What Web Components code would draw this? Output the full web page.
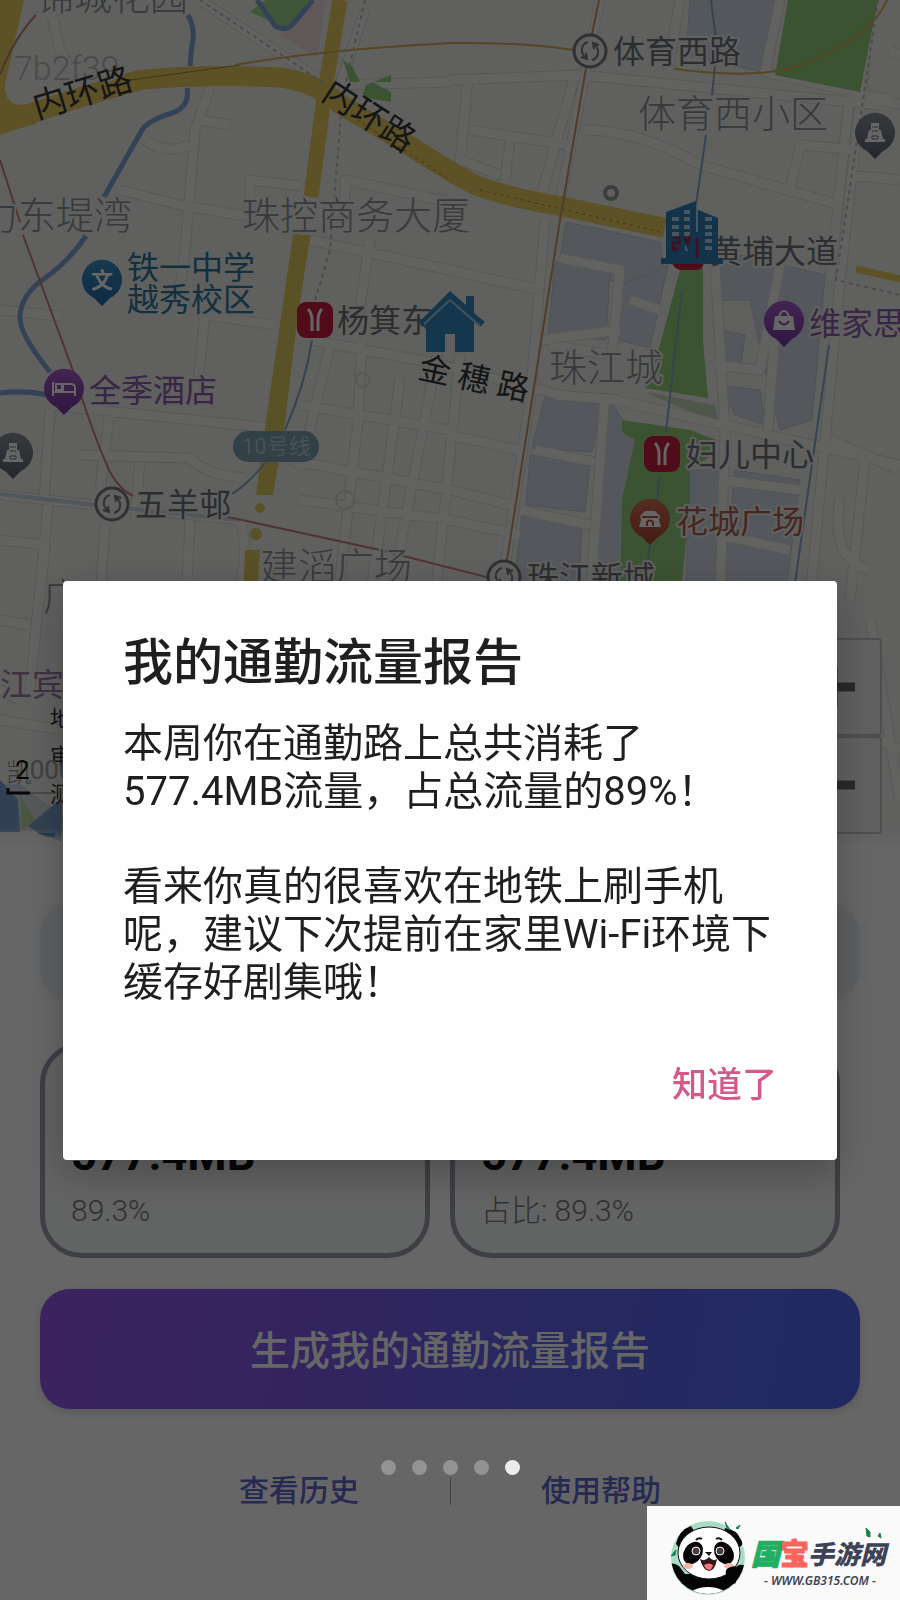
<!DOCTYPE html>
<html lang="zh-CN">
<head>
<meta charset="UTF-8">
<meta name="viewport" content="width=device-width, initial-scale=1">
<title>我的通勤流量报告</title>
<style>
  body {
    margin: 0;
    background: #fff;
    font-family: Roboto, "Noto Sans CJK SC", sans-serif;
  }
</style>
</head>
<body>
<commute-page>
  <city-map slot="map"></city-map>
  <map-zoom slot="zoom"></map-zoom>
  <usage-card slot="card"><span slot="value">577.4MB</span><span slot="note">89.3%</span></usage-card>
  <usage-card slot="card"><span slot="value">577.4MB</span><span slot="note">占比: 89.3%</span></usage-card>
  <report-button slot="action">生成我的通勤流量报告</report-button>
  <foot-links slot="links">
    <a href="#history">查看历史</a>
    <a href="#help">使用帮助</a>
  </foot-links>
</commute-page>
<report-dialog>
  <span slot="title">我的通勤流量报告</span>
  <p>本周你在通勤路上总共消耗了577.4MB流量&#xFF0C;占总流量的89%&#xFF01;</p>
  <p>看来你真的很喜欢在地铁上刷手机呢&#xFF0C;建议下次提前在家里Wi-Fi环境下缓存好剧集哦&#xFF01;</p>
  <span slot="confirm">知道了</span>
</report-dialog>
<page-dots count="5" active="4"></page-dots>
<site-mark></site-mark>

<script>
  class CommutePage extends HTMLElement {
    connectedCallback() {
      this.attachShadow({ mode: 'open' });
      this.shadowRoot.innerHTML = `
        <style>
          :host {
            display: block;
            min-height: 100vh;
          }
          .map {
            position: relative;
          }
          .zoom {
            position: absolute;
            right: 18px;
            bottom: 14px;
          }
          .panel {
            display: flex;
            flex-direction: column;
            padding: 56px 40px 84px;
          }
          .tip {
            height: 96px;
            border-radius: 32px;
            background: #e8eef4;
            box-shadow: 0 0 12px #e8eef4;
          }
          .cards {
            display: grid;
            grid-template-columns: 1fr 1fr;
            gap: 20px;
            margin: 42px 20px 31px 0;
          }
        </style>
        <div class="map">
          <slot name="map"></slot>
          <div class="zoom"><slot name="zoom"></slot></div>
        </div>
        <div class="panel">
          <div class="tip"></div>
          <div class="cards"><slot name="card"></slot></div>
          <slot name="action"></slot>
          <slot name="links"></slot>
        </div>
      `;
    }
  }
  customElements.define('commute-page', CommutePage);

  class CityMap extends HTMLElement {
    connectedCallback() {
      this.attachShadow({ mode: 'open' });

      const pin = (x, y, color, glyph) => `
        <g transform="translate(${x} ${y})">
          <path d="M0 26L-8 18A20 20 0 1 1 8 18Z" fill="${color}"/>
          ${glyph}
        </g>`;
      const metro = (x, y) => `
        <g transform="translate(${x} ${y})">
          <rect x="-18" y="-18" width="36" height="36" rx="9" fill="#c9203f"/>
          <path d="M-7 -11Q-3 -7 -3 0V11M7 -11Q3 -7 3 0V11" fill="none" stroke="#fff" stroke-width="3"/>
        </g>`;
      const station = (x, y) => `
        <g transform="translate(${x} ${y})" fill="none" stroke="#74787c" stroke-width="3">
          <circle r="16" fill="#f0f0ee"/>
          <path d="M-2 -9Q-9 -7 -8 1Q-7 4 -4 7M-9 6L-3 8L-4 2M2 9Q9 7 8 -1Q7 -4 4 -7M9 -6L3 -8L4 -2" stroke-width="2"/>
        </g>`;
      const tower = `<path d="M-10 9H10V6H8L6 -3H4V-10H-4V-3H-6L-8 6H-10Z" fill="#fff"/>
        <path d="M-3 -6H3M-3 -2H3M-3 3H3V6H-3Z" stroke="#6c727c" stroke-width="1" fill="none"/>`;

      const streets = `
        M52 15L60 50L72 72 M210 88L195 130L185 250L178 300 M120 190L180 205L245 216 M145 140Q165 155 190 145
        M250 210V180L300 186 M345 215V180L450 202 M200 120L230 125 M310 240L450 270 M370 240L355 340
        M0 310L60 316 M205 315L275 325 M205 315L195 410 M50 405L270 428 M110 410L100 490 M50 410L44 500
        M80 455L190 458Q205 475 245 478 M140 460L135 520 M0 495L95 505L240 520 M0 540L45 545L40 600
        M48 505L30 690 M105 525L100 600 M190 520L186 600 M240 520Q250 545 238 600 M0 620L30 625
        M310 340L430 362L560 395 M330 345L300 470 M362 340L358 420L340 580 M300 405L450 430 M290 460L450 490
        M400 380L370 600 M440 340L390 600 M460 355L435 600 M300 500L450 520L520 535 M450 435L525 452 M450 490L510 505
        M200 0L320 80 M365 10L340 85L450 82 M450 80L580 75L880 105 M468 80L460 160L500 175 M470 130L570 145 M510 140L505 180
        M575 75L540 200 M585 130Q640 130 700 165L840 205 M600 0L560 200 M680 0L668 70 M780 0L765 72L890 100
        M800 145L790 190 M800 145L860 150 M450 270L540 290 M545 220L530 400L500 600 M540 340L620 330
        M560 258L620 270L612 355L550 345 M630 300L660 310 M555 395L620 400 M535 450L595 462 M520 510L590 525
        M605 395L590 600 M615 400L900 465 M715 265L725 430L720 600 M780 265L760 370L715 365 M775 330L768 430
        M720 480L800 490 M720 535L790 550 M865 60L840 280L810 600 M830 440L900 470 M865 460L850 600
        M840 500Q830 560 870 570 M860 0L830 280 M890 50L900 55 M880 100L900 105 M850 175L900 180
        M870 620L900 800 M880 740L900 750 M0 690L20 700 M0 720L62 730`;

      const blocks = [
        '690,0 775,0 762,72 686,55', '566,222 660,242 664,268 655,300 560,258', '555,262 610,272 606,340 548,335',
        '622,285 668,265 650,348 618,340', '718,250 825,275 812,420 780,430 765,370 750,300 718,300',
        '720,330 745,335 740,372 722,365', '720,385 760,390 765,425 735,415', '545,396 602,405 592,452 532,448',
        '530,455 590,465 585,512 526,505', '522,515 582,525 578,600 512,600', '610,400 635,440 625,600 592,600',
        '690,470 725,470 720,600 685,600', '735,470 800,480 785,600 722,590', '0,785 20,785 40,800 62,815 62,830 0,830'
      ];

      this.shadowRoot.innerHTML = `
        <style>
          :host {
            display: block;
          }
          svg {
            display: block;
            width: 100%;
            height: auto;
          }
          text {
            font-family: Roboto, "Noto Sans CJK SC", sans-serif;
            font-size: 32px;
            fill: #6c7278;
            stroke: #f0f0ee;
            stroke-width: 4px;
            stroke-linejoin: round;
            paint-order: stroke;
          }
          .area {
            font-size: 38px;
            font-weight: 300;
            fill: #8a9098;
          }
          .road {
            fill: #363636;
            stroke: none;
          }
          .small {
            font-size: 22px;
          }
        </style>
        <svg viewBox="0 0 900 848" role="img" aria-label="通勤地图">
          <defs>
            <linearGradient id="fade" x1="0" y1="0" x2="0" y2="1">
              <stop offset="0" stop-color="#fff" stop-opacity="0"/>
              <stop offset="1" stop-color="#fff"/>
            </linearGradient>
            <linearGradient id="blue" x1="0" y1="0" x2="0" y2="1">
              <stop offset="0" stop-color="#3a8fc4"/><stop offset="1" stop-color="#1f6ea8"/>
            </linearGradient>
            <linearGradient id="purple" x1="0" y1="0" x2="0" y2="1">
              <stop offset="0" stop-color="#a55fc8"/><stop offset="1" stop-color="#7a38a6"/>
            </linearGradient>
            <linearGradient id="grey" x1="0" y1="0" x2="0" y2="1">
              <stop offset="0" stop-color="#8a9098"/><stop offset="1" stop-color="#5a626e"/>
            </linearGradient>
            <linearGradient id="red" x1="0" y1="0" x2="0" y2="1">
              <stop offset="0" stop-color="#d4705a"/><stop offset="1" stop-color="#a8452f"/>
            </linearGradient>
          </defs>
          <rect width="900" height="848" fill="#f0f0ee"/>

          <!-- city blocks, parks -->
          <g fill="#d3d9e6" stroke="#c3c9d4">
            ${blocks.map(points => `<polygon points="${points}"/>`).join('')}
          </g>
          <path d="M293 0H325L318 58L280 35Z" fill="#ecdcdc"/>
          <path d="M250 12L265 0H310L290 30Z" fill="#a4d68c"/>

          <!-- streets -->
          <path d="${streets}" fill="none" stroke="#d9d9d7" stroke-width="11" stroke-linejoin="round"/>
          <path d="${streets}" fill="none" stroke="#f4f4f2" stroke-width="9" stroke-linejoin="round"/>
          <g fill="none" stroke="#d9d9d7" stroke-width="2">
            <circle cx="363" cy="380" r="7"/>
            <circle cx="345" cy="500" r="9"/>
          </g>
          <g fill="#96cf7c">
            <path d="M788 0H878L860 92L775 75Z"/>
            <path d="M680 270L703 268L703 340L708 398L645 388L660 345Z"/>
            <path d="M622 420L690 430L717 440L712 455L690 470L690 505L680 600H620L622 500L635 440L622 432Z"/>
            <path d="M366 85L391 75V82L372 82L391 92V102L362 97Z"/>
            <path d="M343 60L352 66L360 82L350 82Z"/>
          </g>
          <path d="M645 392L715 405L718 420L690 412Z" fill="#c5d8b8"/>

          <!-- rivers -->
          <g fill="none" stroke="#7fa6d8" stroke-width="5">
            <path d="M188 15Q196 30 192 45L190 66M187 88Q190 105 175 112Q148 120 142 130L104 197M86 236Q70 260 45 278Q20 295 20 318Q20 335 50 372M0 393Q25 390 48 395"/>
            <path d="M257 0L275 26Q285 32 293 24L313 0"/>
          </g>
          <path d="M0 494L95 505L240 520" fill="none" stroke="#c8d6e2" stroke-width="4"/>

          <!-- ring road and avenue -->
          <path d="M0 0H24L5 85Q4 104 22 105L36 102V124L0 134Z" fill="#e8cc60"/>
          <g fill="none" stroke="#e8cc60">
            <path d="M-10 128Q60 102 140 80Q200 74 270 77Q310 78 340 104L410 146Q450 172 475 185Q510 198 560 206L665 228" stroke-width="20"/>
            <path d="M856 269L905 280" stroke-width="7"/>
            <path d="M340 0L325 90L311 197M303 235L292 300L276 425" stroke-width="15"/>
          </g>
          <path d="M293 235H310L296 330L284 430L273 495H256L266 420Z" fill="#e2cc62"/>
          <g fill="#dcca60">
            <circle cx="260" cy="508" r="5"/><circle cx="256" cy="534" r="6"/><path d="M245 550H260L257 600H243Z"/>
          </g>
          <g fill="none" stroke="#a8843c" stroke-width="1">
            <path d="M345 112L450 180M480 190L660 232" stroke-dasharray="3 4"/>
            <path d="M130 80L240 65"/>
          </g>

          <!-- rail and metro lines -->
          <g fill="none" stroke-width="2">
            <path d="M36 15Q14 38 0 75M0 160L20 222M23 235L72 368Q95 440 110 472Q120 490 133 496M228 517L380 550L490 578" stroke="#c48086"/>
            <path d="M235 65Q320 50 450 43Q520 42 573 50M675 69Q760 80 800 65Q870 40 887 0" stroke="#d8ae58"/>
            <path d="M599 0L592 34M586 68L560 220L507 560" stroke="#c49a68"/>
            <path d="M711 0L716 40M715 66L712 95M706 135L696 205M682 290L666 432M829 345L794 590M660 475L657 500M650 545L648 560M312 340Q305 385 285 430M265 463Q250 482 232 494" stroke="#89a7c6"/>
            <path d="M200 0L325 84M365 0L345 85M341 115L330 250L315 300M878 0L836 280L900 295" stroke="#bbb" stroke-dasharray="4 4"/>
          </g>
          <circle cx="611" cy="193" r="6" fill="#f0f0ee" stroke="#96989a" stroke-width="4"/>

          <!-- area names -->
          <text class="area" x="36" y="10">锦城花园</text>
          <text class="area" x="14" y="80" style="font-size:34px;fill:#b8b8b8">7b2f39</text>
          <text class="area" x="-20" y="229">力东堤湾</text>
          <text class="area" x="242" y="229">珠控商务大厦</text>
          <text class="area" x="638" y="127">体育西小区</text>
          <text class="area" x="549" y="381">珠江城</text>
          <text class="area" x="260" y="580">建滔广场</text>
          <text class="area" x="43" y="610">广</text>

          <!-- road names -->
          <text class="road" style="font-size:34px" transform="translate(37 119) rotate(-17)">内环路</text>
          <text class="road" style="font-size:34px" transform="translate(320 98) rotate(33)">内环路</text>
          <text class="road" transform="translate(417 378) rotate(12)">金 穗 路</text>

          <!-- places -->
          ${pin(102, 280, 'url(#blue)', '<text class="small" x="-11" y="8" style="fill:#fff;stroke:none;font-weight:700">文</text>')}
          <text x="127" y="279" style="fill:#2d7898">铁一中学</text>
          <text x="127" y="311" style="fill:#2d7898">越秀校区</text>
          ${pin(64, 389, 'url(#purple)', '<path d="M-11 -7V7M11 7V-1Q11 -5 7 -5H-1V3M-11 3H11" stroke="#fff" stroke-width="2" fill="none"/><rect x="-8" y="-5" width="6" height="6" fill="none" stroke="#fff" stroke-width="2"/>')}
          <text x="89" y="402" style="fill:#8f5cac">全季酒店</text>
          ${pin(13, 453, 'url(#grey)', tower)}
          ${pin(875, 133, 'url(#grey)', tower)}
          ${pin(784, 321, 'url(#purple)', '<path d="M-9 -5H9L11 9H-11Z" fill="#fff"/><path d="M-5 -5Q0 -15 5 -5" stroke="#fff" stroke-width="2" fill="none"/><path d="M-5 0Q0 7 5 0" stroke="#8a48b4" stroke-width="2" fill="none"/>')}
          <text x="809" y="335" style="fill:#8f5cac">维家思</text>
          ${pin(650, 519, 'url(#red)', '<path d="M-11 8L-9 1L-10 -3L-5 -8H5L10 -3L9 1L11 8Z" fill="#fff"/><path d="M-8 -2H8M-3 7V3Q0 0 3 3V7" stroke="#b5533d" stroke-width="2" fill="none"/>')}
          <text x="676" y="533" style="fill:#b06050">花城广场</text>
          ${metro(315, 320)}
          <text x="337" y="332">杨箕东</text>
          ${metro(662, 454)}
          <text x="686" y="466">妇儿中心</text>
          ${station(590, 51)}
          <text x="613" y="63">体育西路</text>
          ${station(112, 504)}
          <text x="135" y="516">五羊邨</text>
          ${station(504, 577)}
          <text x="527" y="589">珠江新城</text>
          <rect x="233" y="431" width="86" height="31" rx="15" fill="#7aa2b2"/>
          <text class="small" x="242" y="454" style="fill:#b4ccd4;stroke:none">10号线</text>
          <text x="710" y="263">黄埔大道</text>

          <!-- office -->
          <path d="M672 262Q674 270 682 270H696Q703 270 704 262Z" fill="#c9203f"/>
          <path d="M661 264V258H666V212L696 201V209L718 218V258H723V264Z" fill="#3080bc"/>
          <path d="M697 206V232" stroke="#b8d4ea" stroke-width="2"/>
          <path d="M672 219H679M672 227H679M672 234H679M684 212H690M684 219H690M684 227H690M684 234H690M705 219H712M705 227H712M705 234H712M705 241H712M705 248H712" stroke="#b8d4ea" stroke-width="4"/>
          <path d="M673 238H679V243H673V249H679M684 237L688 243L690 236M697 238V258" fill="none" stroke="#a32a58" stroke-width="3"/>
          <path d="M685 246L687 251" stroke="#b8d4ea" stroke-width="2"/>

          <!-- home -->
          <path d="M419 322L450 291L466 305V296H474V313L485 322L480 327L474 322V352H455V334H445V352H426V323L422 327Z" fill="#3389c4"/>
          <path d="M424 324L450 300L480 326" fill="none" stroke="#a9cfe6" stroke-width="2"/>

          <!-- scale and notices -->
          <path d="M20 795L35 820L22 830Z" fill="#b8d69a"/>
          <path d="M0 780L18 800L20 832H0Z" fill="#7ca0d0"/>
          <path d="M28 826L62 798V842L40 834Z" fill="#7d9fca"/>
          <path d="M37 833H55V837H48Z" fill="#1f5c98"/>
          <text x="0" y="696" style="fill:#9a7aa6">江宾</text>
          <text class="area" x="6" y="782" style="font-size:26px;stroke:none">凯</text>
          <text class="small" x="50" y="726" style="fill:#333;stroke:none">地</text>
          <text class="small" x="50" y="764" style="fill:#333;stroke:none">审</text>
          <text class="small" x="50" y="802" style="fill:#333;stroke:none">测</text>
          <text x="15" y="779" style="font-size:26px;fill:#111;stroke:none">2<tspan fill="#a0a0a0">000</tspan></text>
          <path d="M8 788V793H30" fill="none" stroke="#111" stroke-width="3"/>
          <path d="M30 793H62" stroke="#777" stroke-width="1"/>
          <rect y="828" width="900" height="20" fill="url(#fade)"/>
        </svg>
      `;
    }
  }
  customElements.define('city-map', CityMap);

  class MapZoom extends HTMLElement {
    connectedCallback() {
      this.attachShadow({ mode: 'open' });
      this.shadowRoot.innerHTML = `
        <style>
          :host {
            display: flex;
            flex-direction: column;
          }
          button {
            display: grid;
            place-items: center;
            width: 98px;
            height: 98px;
            padding: 0;
            border: 2px solid #c4c4c4;
            border-radius: 4px;
            background: rgba(240, 240, 240, 0.8);
          }
        </style>
        <button aria-label="放大">
          <svg width="44" height="44"><path d="M0 22H44M22 2V42" stroke="#666" stroke-width="9"/></svg>
        </button>
        <button aria-label="缩小">
          <svg width="44" height="44"><path d="M0 22H44" stroke="#666" stroke-width="9"/></svg>
        </button>
      `;
    }
  }
  customElements.define('map-zoom', MapZoom);

  class UsageCard extends HTMLElement {
    connectedCallback() {
      this.attachShadow({ mode: 'open' });
      this.shadowRoot.innerHTML = `
        <style>
          :host {
            display: flex;
            flex-direction: column;
            justify-content: flex-end;
            gap: 8px;
            box-sizing: border-box;
            min-height: 216px;
            padding: 22px 26px;
            border: 5px solid #9a9eac;
            border-radius: 42px;
            background: #f6f7f7;
          }
          .value {
            font-size: 45px;
            line-height: 56px;
            font-weight: 700;
            color: #111;
          }
          .note {
            font-size: 30px;
            line-height: 40px;
            font-weight: 300;
            color: #7a7a7a;
          }
        </style>
        <div class="value"><slot name="value"></slot></div>
        <div class="note"><slot name="note"></slot></div>
      `;
    }
  }
  customElements.define('usage-card', UsageCard);

  class ReportButton extends HTMLElement {
    connectedCallback() {
      this.attachShadow({ mode: 'open' });
      this.shadowRoot.innerHTML = `
        <style>
          :host {
            display: block;
          }
          button {
            width: 100%;
            height: 120px;
            padding: 6px 0 0;
            border: 0;
            border-radius: 30px;
            background: linear-gradient(100deg, #9658f0, #7a5cee 40%, #6464f0 60%, #5268f4);
            box-shadow: 0 3px 8px rgba(60, 60, 90, 0.2);
            font: 500 40px/48px Roboto, "Noto Sans CJK SC", sans-serif;
            color: #fff;
          }
        </style>
        <button><slot></slot></button>
      `;
    }
  }
  customElements.define('report-button', ReportButton);

  class FootLinks extends HTMLElement {
    connectedCallback() {
      this.attachShadow({ mode: 'open' });
      this.shadowRoot.innerHTML = `
        <style>
          :host {
            display: flex;
            justify-content: center;
            align-items: center;
            gap: 182px;
            margin-top: 58px;
            background: linear-gradient(#aaa, #aaa) center / 1px 28px no-repeat;
          }
          ::slotted(a) {
            font-size: 30px;
            line-height: 48px;
            font-weight: 500;
            color: #6068cc;
            text-decoration: none;
          }
        </style>
        <slot></slot>
      `;
    }
  }
  customElements.define('foot-links', FootLinks);

  class ReportDialog extends HTMLElement {
    connectedCallback() {
      this.attachShadow({ mode: 'open' });
      this.shadowRoot.innerHTML = `
        <style>
          :host {
            position: fixed;
            inset: 0;
            display: flex;
            align-items: center;
            justify-content: center;
            padding-top: 140px;
            background: rgba(0, 0, 0, 0.6);
          }
          .dialog {
            display: flex;
            flex-direction: column;
            box-sizing: border-box;
            width: 86%;
            padding: 52px 60px 50px;
            border-radius: 4px;
            background: #fefefe;
            box-shadow: 0 12px 40px rgba(0, 0, 0, 0.25);
          }
          h2 {
            margin: 0 0 27px;
            font-size: 50px;
            line-height: 60px;
            font-weight: 500;
            color: #1f1f1f;
          }
          .body {
            display: flex;
            flex-direction: column;
            gap: 47px;
          }
          ::slotted(p) {
            margin: 0;
            font-size: 40px;
            line-height: 48px;
            color: #1f1f1f;
          }
          button {
            align-self: flex-end;
            margin-top: 55px;
            padding: 0;
            border: 0;
            background: none;
            font: 500 35px/48px Roboto, "Noto Sans CJK SC", sans-serif;
            color: #d4588c;
          }
        </style>
        <div class="dialog" role="dialog" aria-modal="true">
          <h2><slot name="title"></slot></h2>
          <div class="body"><slot></slot></div>
          <button><slot name="confirm"></slot></button>
        </div>
      `;
    }
  }
  customElements.define('report-dialog', ReportDialog);

  class PageDots extends HTMLElement {
    connectedCallback() {
      const count = Number(this.getAttribute('count'));
      const active = Number(this.getAttribute('active'));
      let dots = '';
      for (let i = 0; i < count; i++) {
        dots += `<i class="${i === active ? 'active' : ''}"></i>`;
      }
      this.attachShadow({ mode: 'open' });
      this.shadowRoot.innerHTML = `
        <style>
          :host {
            position: fixed;
            left: 0;
            right: 0;
            bottom: 125px;
            display: flex;
            justify-content: center;
            gap: 16px;
          }
          i {
            width: 15px;
            height: 15px;
            border-radius: 50%;
            background: #939393;
          }
          .active {
            background: #ececec;
          }
        </style>
        ${dots}
      `;
    }
  }
  customElements.define('page-dots', PageDots);

  class SiteMark extends HTMLElement {
    connectedCallback() {
      this.attachShadow({ mode: 'open' });
      this.shadowRoot.innerHTML = `
        <style>
          :host {
            position: fixed;
            right: 0;
            bottom: 0;
            background: #fafafa;
          }
          svg {
            display: block;
          }
          text {
            font-family: "Noto Sans CJK SC", sans-serif;
            font-weight: 900;
            stroke-linejoin: round;
          }
          .url {
            font-family: "Noto Sans", sans-serif;
            font-size: 12px;
            font-style: italic;
            font-weight: 600;
          }
        </style>
        <svg width="253" height="94" viewBox="0 0 253 94">
          <defs><clipPath id="disc"><circle cx="61" cy="51" r="37"/></clipPath></defs>
          <circle cx="61" cy="52" r="37" fill="#a9dcc5"/>
          <g clip-path="url(#disc)">
            <path d="M20 62Q24 54 32 60L38 68H84L90 60Q98 56 102 66V94H20Z" fill="#050505"/>
            <ellipse cx="61" cy="91" rx="20" ry="10" fill="#fff"/>
          </g>
          <path d="M29 38Q32 24 44 20L49 28L34 44ZM78 22Q90 24 93 32Q97 38 94 40L88 44L76 29Z" fill="#050505"/>
          <ellipse cx="62" cy="47" rx="31" ry="26" fill="#fff" stroke="#111" stroke-width="1"/>
          <ellipse cx="46" cy="47" rx="9" ry="12" fill="#050505" transform="rotate(32 46 47)"/>
          <ellipse cx="77" cy="47" rx="9" ry="12" fill="#050505" transform="rotate(-32 77 47)"/>
          <g fill="#4a3c38" stroke="#fff" stroke-width="1">
            <circle cx="49" cy="45" r="4"/><circle cx="73" cy="45" r="4"/>
          </g>
          <path d="M58 46H65L62 50Z" fill="#111"/>
          <path d="M53 53Q58 56 62 51Q66 56 70 53Q68 65 62 65Q56 64 53 53Z" fill="#33191a"/>
          <path d="M57 59Q62 56 66 59Q65 64 62 64Q58 63 57 59Z" fill="#f1767a"/>
          <path d="M49 34Q52 31 55 33M69 33Q72 31 75 34" fill="none" stroke="#111" stroke-width="2"/>
          <ellipse cx="41" cy="60" rx="5" ry="3" fill="#f6b6ac"/><ellipse cx="82" cy="60" rx="5" ry="3" fill="#f6b6ac"/>
          <path d="M79 70Q77 62 84 61Q91 58 92 68L88 78Z" fill="#050505"/>
          <path d="M78 16L83 24L80 22ZM24 50L29 44L28 49ZM93 19L91 23L89 22ZM219 22L223 26V31L220 30ZM231 30L233 27L234 32Z" fill="#15804e" stroke="#15804e"/>
          <text x="104" y="59" font-size="29" fill="#1fae62" stroke="#1fae62" font-style="italic">国</text>
          <text x="133" y="59" font-size="29" fill="#f9645c" stroke="#f9645c">宝</text>
          <text x="161" y="58" font-size="26" fill="#3c4357" font-style="italic">手游网</text>
          <text class="url" x="117" y="79" fill="#3c4357">- WWW.GB315.COM -</text>
        </svg>
      `;
    }
  }
  customElements.define('site-mark', SiteMark);
</script>
</body>
</html>
